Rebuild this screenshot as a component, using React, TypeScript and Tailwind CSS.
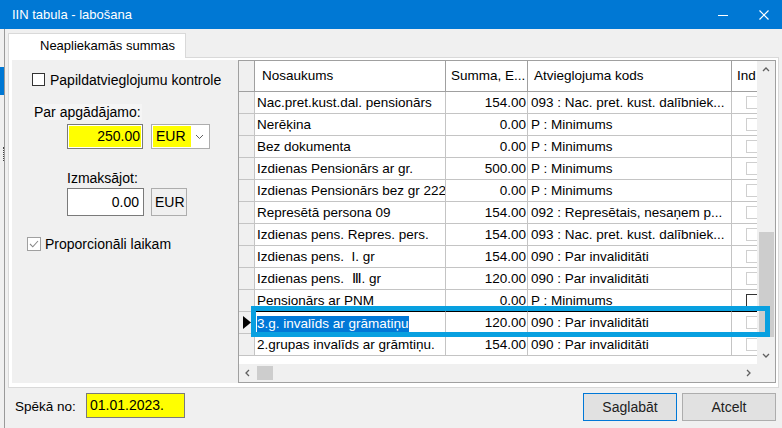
import React from 'react';

type Row = { name: string; sum: string; code: string };

const rows: Row[] = [
  { name: 'Nac.pret.kust.dal. pensionārs', sum: '154.00', code: '093 : Nac. pret. kust. dalībniek...' },
  { name: 'Nerēķina', sum: '0.00', code: 'P : Minimums' },
  { name: 'Bez dokumenta', sum: '0.00', code: 'P : Minimums' },
  { name: 'Izdienas Pensionārs ar gr.', sum: '500.00', code: 'P : Minimums' },
  { name: 'Izdienas Pensionārs bez gr 222', sum: '0.00', code: 'P : Minimums' },
  { name: 'Represētā persona 09', sum: '154.00', code: '092 : Represētais, nesaņem p...' },
  { name: 'Izdienas pens. Repres. pers.', sum: '154.00', code: '093 : Nac. pret. kust. dalībniek...' },
  { name: 'Izdienas pens.  I. gr', sum: '154.00', code: '090 : Par invaliditāti' },
  { name: 'Izdienas pens.  Ⅲ. gr', sum: '120.00', code: '090 : Par invaliditāti' },
  { name: 'Pensionārs ar PNM', sum: '0.00', code: 'P : Minimums' },
  { name: '3.g. invalīds ar grāmatiņu', sum: '120.00', code: '090 : Par invaliditāti' },
  { name: '2.grupas invalīds ar grāmtiņu.', sum: '154.00', code: '090 : Par invaliditāti' },
];

const SELECTED = 10;

function Chevron({ dir }: { dir: 'up' | 'down' | 'left' | 'right' }) {
  const d = {
    up: 'M1 5L4 2L7 5',
    down: 'M1 2L4 5L7 2',
    left: 'M5 1L2 4L5 7',
    right: 'M2 1L5 4L2 7',
  }[dir];
  return (
    <svg width="8" height="8" viewBox="0 0 8 8">
      <path d={d} fill="none" stroke="#606060" strokeWidth="1.3" />
    </svg>
  );
}

function GridRow({ row, index }: { row: Row; index: number }) {
  const selected = index === SELECTED;
  // the row above the current one gets the black focus line
  const line = index === SELECTED - 1 ? 'border-b-black' : 'border-b-[#c4c4c4]';
  return (
    <div className="flex h-[22px] shrink-0">
      <div className="w-[16px] h-full bg-[#f0f0f0] border-r border-b border-[#c4c4c4] flex items-center justify-center">
        {selected && (
          <svg width="8" height="13" viewBox="0 0 8 13">
            <path d="M0 0L8 6.5L0 13Z" fill="#000" />
          </svg>
        )}
      </div>
      <div className={`w-[191px] h-full border-r border-r-[#c4c4c4] border-b ${line} flex items-center pt-[2px] pl-[2px] whitespace-pre overflow-hidden`}>
        {selected ? <span className="bg-[#0078d7] text-white leading-[16px]">{row.name}</span> : row.name}
      </div>
      <div className={`w-[82px] h-full border-r border-r-[#c4c4c4] border-b ${line} flex items-center justify-end pt-[2px] pr-[1px]`}>
        {row.sum}
      </div>
      <div className={`w-[204px] h-full border-r border-r-[#c4c4c4] border-b ${line} flex items-center pt-[2px] pl-[3px] whitespace-nowrap overflow-hidden`}>
        {row.code}
      </div>
      <div className={`flex-1 h-full border-b ${line} flex items-center pl-[14px] overflow-hidden`}>
        <span className={`w-[13px] h-[13px] shrink-0 border bg-white ${index === 9 ? 'border-[#333]' : 'border-[#cfcfcf]'}`} />
      </div>
    </div>
  );
}

function LeftPanel() {
  return (
    <div className="w-[226px] h-[323px] shrink-0 bg-[#f0f0f0] flex flex-col pt-[13px] text-[14px]">
      <div className="flex items-center ml-[20px] h-[13px]">
        <span className="w-[13px] h-[13px] border border-[#333] bg-white shrink-0" />
        <span className="ml-[5px] leading-[16px]">Papildatvieglojumu kontrole</span>
      </div>
      <div className="mt-[18px] ml-[21px] self-start bg-[#f5f5f5] px-[1px] leading-[16px]">Par apgādājamo:</div>
      <div className="mt-[4px] ml-[55px] flex gap-[8px]">
        <div className="w-[76px] h-[25px] border border-[#7a7a7a] bg-white p-[1px]">
          <div className="w-full h-full bg-[#ffff00] flex items-center justify-end pr-[1px]">250.00</div>
        </div>
        <div className="w-[59px] h-[25px] border border-[#adadad] bg-white p-[1px] flex">
          <div className="w-[38px] h-full bg-[#ffff00] flex items-center pl-[3px]">EUR</div>
          <div className="flex-1 flex items-center justify-center">
            <svg width="9" height="6" viewBox="0 0 9 6">
              <path d="M1 1L4.5 4.5L8 1" fill="none" stroke="#606060" strokeWidth="1" />
            </svg>
          </div>
        </div>
      </div>
      <div className="mt-[21px] ml-[55px] leading-[16px]">Izmaksājot:</div>
      <div className="mt-[2px] ml-[55px] flex gap-[7px]">
        <div className="w-[77px] h-[28px] border border-[#7a7a7a] bg-white flex items-center justify-end pr-[4px]">0.00</div>
        <div className="w-[36px] h-[28px] border border-[#adadad] bg-[#f0f0f0] flex items-center pl-[3px]">EUR</div>
      </div>
      <div className="mt-[21px] ml-[15px] flex items-center h-[14px]">
        <span className="w-[14px] h-[14px] border border-[#a0a0a0] bg-white shrink-0 flex items-center justify-center">
          <svg width="10" height="8" viewBox="0 0 10 8">
            <path d="M1 4L3.8 6.8L9 1" fill="none" stroke="#888" strokeWidth="1.1" />
          </svg>
        </span>
        <span className="ml-[4px] leading-[16px]">Proporcionāli laikam</span>
      </div>
    </div>
  );
}

function Grid() {
  return (
    <div className="w-[538px] h-[323px] shrink-0 border border-[#a0a0a0] bg-white flex flex-col">
      <div className="flex flex-1 min-h-0">
        <div className="w-[518px] flex flex-col overflow-hidden">
          <div className="flex h-[31px] shrink-0 border-b border-[#a0a0a0]">
            <div className="w-[16px] h-full border-r border-[#a0a0a0] bg-[#f0f0f0]" />
            <div className="w-[191px] border-r border-[#a0a0a0] flex items-center pt-[1px] pl-[7px]">Nosaukums</div>
            <div className="w-[82px] border-r border-[#a0a0a0] flex items-center pt-[1px] pl-[5px] whitespace-nowrap">Summa, E...</div>
            <div className="w-[204px] border-r border-[#a0a0a0] flex items-center pt-[1px] pl-[6px]">Atvieglojuma kods</div>
            <div className="flex-1 flex items-center pt-[1px] pl-[5px] overflow-hidden">Ind</div>
          </div>
          {rows.map((r, i) => (
            <GridRow key={i} row={r} index={i} />
          ))}
        </div>
        <div className="w-[18px] bg-[#f0f0f0] flex flex-col">
          <div className="h-[17px] flex items-center justify-center">
            <Chevron dir="up" />
          </div>
          <div className="flex-1">
            <div className="mt-[154px] mx-auto w-[15px] h-[105px] bg-[#cdcdcd]" />
          </div>
          <div className="h-[17px] flex items-center justify-center">
            <Chevron dir="down" />
          </div>
        </div>
      </div>
      <div className="h-[18px] shrink-0 flex bg-[#f0f0f0]">
        <div className="w-[17px] flex items-center justify-center">
          <Chevron dir="left" />
        </div>
        <div className="ml-[1px] w-[16px] h-[14px] self-center bg-[#cdcdcd]" />
        <div className="flex-1" />
        <div className="w-[17px] flex items-center justify-center">
          <Chevron dir="right" />
        </div>
        <div className="w-[18px]" />
      </div>
    </div>
  );
}

export default function App() {
  return (
    <div className="relative w-[782px] h-[428px] overflow-hidden bg-[#f0f0f0] font-['Liberation_Sans',Arial,sans-serif] text-[13.5px] text-black flex flex-col">
      {/* Title bar */}
      <div className="h-[29px] shrink-0 bg-[#0078d4] flex items-center pl-[12px] pr-[13px] text-white">
        <span className="flex-1 text-[13px]">IIN tabula - labošana</span>
        <svg width="10" height="10" viewBox="0 0 10 10">
          <path d="M0 5.5H10" stroke="#fff" strokeWidth="1" />
        </svg>
        <svg className="ml-[31px]" width="10" height="10" viewBox="0 0 10 10">
          <path d="M0.5 0.5L9.5 9.5M9.5 0.5L0.5 9.5" stroke="#fff" strokeWidth="1.2" />
        </svg>
      </div>

      <div className="flex flex-1 min-h-0">
        {/* edge of the window behind */}
        <div className="w-[5px] shrink-0 border-r border-[#9a9a9a] flex flex-col">
          <div className="mt-[38px] h-[28px] bg-[#0078d4]" />
          <div className="mt-[52px] ml-[3px] h-[14px] border-l border-dotted border-[#444]" />
        </div>

        <div className="flex-1 flex flex-col pl-[3px]">
          {/* Tab strip */}
          <div className="h-[28px] pt-[4px] flex items-start shrink-0">
            <div className="relative z-10 w-[178px] h-[25px] bg-white border-t border-l border-r border-[#d9d9d9] flex items-center pl-[31px] text-[13px]">
              Neapliekamās summas
            </div>
          </div>

          {/* Tab page */}
          <div className="w-[771px] h-[331px] shrink-0 border border-[#d9d9d9] bg-white flex pl-[3px] pt-[2px]">
            <LeftPanel />
            <Grid />
          </div>

          {/* Bottom bar */}
          <div className="flex-1 flex items-start pt-[5px] pl-[7px] pr-[6px]">
            <span className="w-[71px] h-[25px] mt-[1px] leading-[25px] text-[13.5px]">Spēkā no:</span>
            <div className="w-[99px] h-[25px] border border-[#7a7a7a] bg-[#ffff00] flex items-center pl-[3px] text-[14px]">01.01.2023.</div>
            <div className="flex-1" />
            <button className="w-[94px] h-[28px] border border-[#0078d7] bg-[#e1e1e1] text-[14px] text-[#222]">Saglabāt</button>
            <button className="ml-[5px] w-[94px] h-[28px] border border-[#adadad] bg-[#e1e1e1] text-[14px] text-[#222]">Atcelt</button>
          </div>
        </div>
      </div>

      {/* highlight frame drawn over the selected row */}
      <div className="absolute left-[251px] top-[306px] w-[519px] h-[31px] border-[5px] border-[#08a0e0] pointer-events-none" />
    </div>
  );
}
